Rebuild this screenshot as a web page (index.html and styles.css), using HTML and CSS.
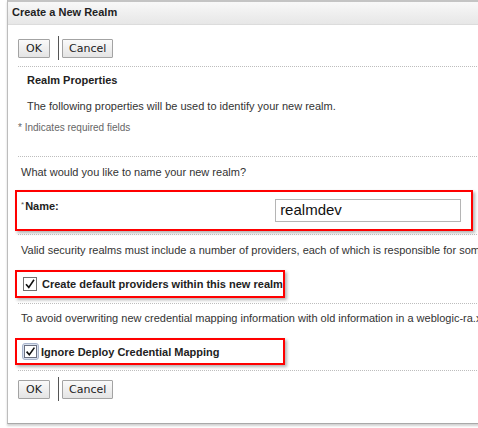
FILE: index.html
```html
<!DOCTYPE html>
<html>
<head>
<meta charset="utf-8">
<link rel="stylesheet" href="styles.css">
</head>
<body>
<div class="panel">
  <div class="titlebar">Create a New Realm</div>
  <div class="content">
    <div class="toolbar first">
      <button class="btn">OK</button>
      <span class="sep"></span>
      <button class="btn">Cancel</button>
    </div>
    <div class="rule r1"></div>
    <div class="heading">Realm Properties</div>
    <div class="desc">The following properties will be used to identify your new realm.</div>
    <div class="req">* Indicates required fields</div>
    <div class="rule r2"></div>
    <div class="text q">What would you like to name your new realm?</div>
    <div class="mark name-row">
      <span class="star">*</span><span class="label">Name:</span>
      <span class="input">realmdev</span>
    </div>
    <div class="rule r3"></div>
    <div class="text t2">Valid security realms must include a number of providers, each of which is responsible for some aspect of security.</div>
    <div class="mark cb-row box2">
      <svg class="cb" width="14" height="14" viewBox="0 0 14 14"><rect x="0.5" y="0.5" width="13" height="13" fill="#fff" stroke="#707070"/><path d="M3 7.2 L5.8 10.4 L11 2.8" fill="none" stroke="#111" stroke-width="1.6"/></svg>
      <span class="cblabel">Create default providers within this new realm</span>
    </div>
    <div class="rule r4"></div>
    <div class="text t3">To avoid overwriting new credential mapping information with old information in a weblogic-ra.xml file, select this option.</div>
    <div class="mark cb-row box3">
      <span class="focus"><svg class="cb" width="13" height="13" viewBox="0 0 13 13"><rect x="0.5" y="0.5" width="12" height="12" fill="#fff" stroke="#6a6f80"/><path d="M2.6 6.6 L5.3 9.7 L10.4 2.6" fill="none" stroke="#111" stroke-width="1.6"/></svg></span>
      <span class="cblabel">Ignore Deploy Credential Mapping</span>
    </div>
    <div class="rule r5"></div>
    <div class="toolbar last">
      <button class="btn">OK</button>
      <span class="sep"></span>
      <button class="btn">Cancel</button>
    </div>
  </div>
</div>
</body>
</html>
```
FILE: styles.css
```css
html, body {
  margin: 0;
  padding: 0;
  background: #fff;
  overflow: hidden;
  width: 478px;
  height: 428px;
}
body {
  font-family: "Liberation Sans", Arial, sans-serif;
  font-size: 11px;
  color: #333;
}
.panel {
  margin-left: 7px;
  width: 620px;
  height: 424px;
  border-left: 1px solid #bdbdbd;
  border-bottom: 1px solid #a9a9a9;
  box-shadow: 0 2px 2px rgba(0,0,0,0.18);
  box-sizing: border-box;
}
.titlebar {
  height: 25px;
  box-sizing: border-box;
  border-top: 2px solid #c4c4c4;
  border-bottom: 1px solid #dcdcdc;
  background: linear-gradient(#f8f8f8, #e7e7e7);
  font-weight: bold;
  color: #222;
  padding-left: 4px;
  line-height: 21px;
}
.content {
  padding-left: 10px;
  overflow: hidden;
}
.toolbar {
  display: flex;
  align-items: center;
  height: 24px;
}
.toolbar.first { margin-top: 11px; }
.toolbar.last { margin-top: 6px; }
.btn {
  font-family: "DejaVu Sans", sans-serif;
  font-size: 11px;
  color: #222;
  height: 19px;
  padding: 0 6px;
  border: 1px solid #a3a3a3;
  border-radius: 1px;
  background: linear-gradient(#fafafa, #e4e4e4);
  margin: 0;
  line-height: 17px;
}
.btn:first-child { width: 32px; padding: 0; }
.sep {
  width: 1px;
  height: 24px;
  background: #555;
  margin: 0 3px 0 8px;
}
.rule {
  border-top: 1px dotted #bdbdbd;
  height: 0;
}
.r1 { margin-top: 6px; }
.r2 { margin-top: 21px; }
.r3 { margin-top: 3px; }
.r4 { margin-top: 5px; }
.r5 { margin-top: 5px; }
.heading {
  font-weight: bold;
  color: #222;
  margin-top: 6px;
  padding-left: 9px;
  line-height: 14px;
}
.desc {
  margin-top: 12px;
  padding-left: 9px;
  line-height: 14px;
}
.req {
  margin-top: 8px;
  line-height: 14px;
  font-size: 10px;
  color: #666;
}
.text {
  margin-top: 8px;
  padding-left: 3px;
  line-height: 14px;
  white-space: nowrap;
}
.t3 { margin-top: 7px; }
.mark {
  margin-left: -3px;
  border: 2px solid #f00;
  box-shadow: 2px 2px 3px rgba(0,0,0,0.3);
  box-sizing: border-box;
  display: flex;
  align-items: center;
}
.name-row {
  margin-top: 11px;
  width: 458px;
  height: 41px;
  padding-left: 4px;
  align-items: flex-start;
}
.star {
  font-size: 8px;
  color: #555;
  margin-top: 8px;
  margin-right: 1px;
}
.label {
  font-weight: bold;
  color: #222;
  margin-top: 8px;
  width: 250px;
}
.input {
  margin-top: 7px;
  width: 186px;
  height: 23px;
  box-sizing: border-box;
  border: 1px solid #b5b5b5;
  font-size: 15px;
  color: #111;
  padding-left: 4px;
  line-height: 20px;
}
.cb-row {
  margin-top: 13px;
}
.box2 {
  width: 270px;
  height: 28px;
  padding-left: 6px;
}
.box3 {
  margin-top: 13px;
  width: 270px;
  height: 27px;
  padding-left: 5px;
}
.cb { display: block; }
.box2 .cblabel { margin-left: 5px; }
.focus {
  display: block;
  padding: 1px;
  border: 1px solid #a9b4cc;
  border-radius: 3px;
  background: #d9e1ef;
}
.box3 .cblabel { margin-left: 2px; }
.cblabel {
  font-weight: bold;
  color: #222;
  white-space: nowrap;
}
```
